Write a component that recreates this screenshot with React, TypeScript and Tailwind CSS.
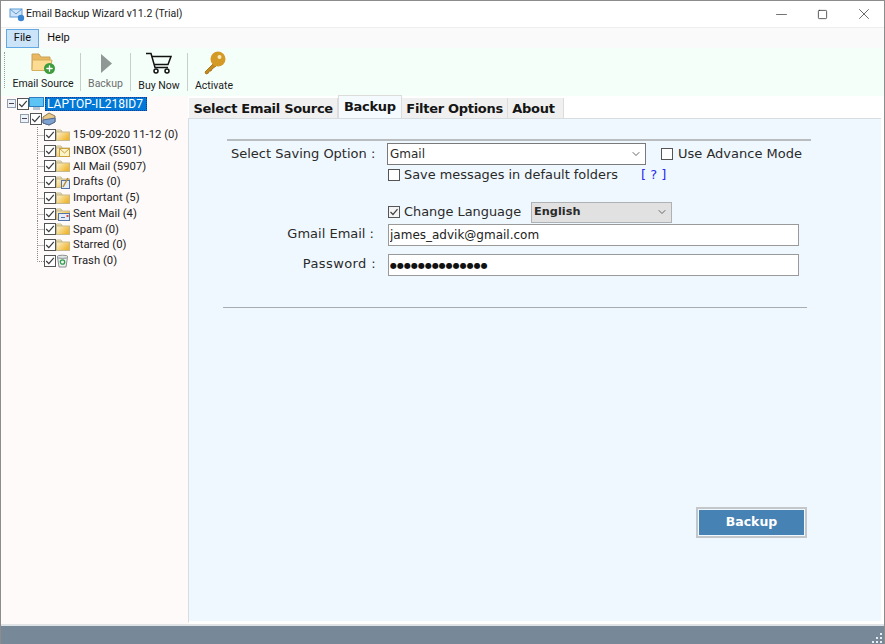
import { ChevronDown, Minus, Plus, Square, X } from "lucide-react"
import type { ReactNode } from "react"

const folders = [
  { label: "15-09-2020 11-12 (0)", icon: "folder" },
  { label: "INBOX (5501)", icon: "inbox" },
  { label: "All Mail (5907)", icon: "folder" },
  { label: "Drafts (0)", icon: "drafts" },
  { label: "Important (5)", icon: "folder" },
  { label: "Sent Mail (4)", icon: "sent" },
  { label: "Spam (0)", icon: "folder" },
  { label: "Starred (0)", icon: "folder" },
  { label: "Trash (0)", icon: "trash" },
]

function TreeCheck() {
  return (
    <svg width="12" height="12" viewBox="0 0 12 12" className="shrink-0">
      <rect x="0.5" y="0.5" width="11" height="11" fill="#fff" stroke="#555" />
      <path d="M2.2 6 L4.8 8.6 L9.8 2.8" fill="none" stroke="#3a3a3a" strokeWidth="1.2" />
    </svg>
  )
}

function FormCheck({ checked }: { checked?: boolean }) {
  return (
    <svg width="12" height="12" viewBox="0 0 12 12" className="shrink-0">
      <rect x="0.5" y="0.5" width="11" height="11" fill={checked ? "#f4f4f4" : "#fff"} stroke="#555" />
      {checked && <path d="M2.5 6 L5 8.5 L9.5 3.2" fill="none" stroke="#444" strokeWidth="1.2" />}
    </svg>
  )
}

function Expander() {
  return (
    <svg width="9" height="9" viewBox="0 0 9 9" className="shrink-0">
      <rect x="0.5" y="0.5" width="8" height="8" fill="#eef1f5" stroke="#8f9eae" />
      <path d="M2 4.5 H7" stroke="#445" />
    </svg>
  )
}

function TreeLine({ last }: { last?: boolean }) {
  return (
    <svg width="8" height="16" viewBox="0 0 8 16" className="shrink-0">
      <path
        d={last ? "M0.5 0 V8.5 H8" : "M0.5 0 V16 M0.5 8.5 H8"}
        fill="none"
        stroke="#888"
        strokeDasharray="1 1"
      />
    </svg>
  )
}

function FolderIcon({ kind }: { kind: string }) {
  if (kind === "trash") {
    return (
      <svg width="13" height="14" viewBox="0 0 13 14" className="shrink-0">
        <path d="M1.5 3 L3 13 H10 L11.5 3 Z" fill="#eef2f2" stroke="#8a8f8f" />
        <ellipse cx="6.5" cy="2.8" rx="5.5" ry="1.6" fill="#dfe6e6" stroke="#8a8f8f" />
        <circle cx="6.5" cy="8" r="2.2" fill="none" stroke="#2e9e4a" strokeWidth="1.3" />
      </svg>
    )
  }
  return (
    <svg width="14" height="14" viewBox="0 0 14 14" className="shrink-0">
      <defs>
        <linearGradient id="folder-fill" x1="0" y1="0" x2="1" y2="0.6">
          <stop offset="0" stopColor="#fdf4d2" />
          <stop offset="1" stopColor="#efb52d" />
        </linearGradient>
      </defs>
      <path d="M0.5 4 V2 H5 L6.2 4 Z" fill="#fbeebb" stroke="#c6b98f" />
      <rect x="0.5" y="4" width="13" height="8.5" fill="url(#folder-fill)" stroke="#c6b98f" />
      {kind === "inbox" && (
        <g>
          <rect x="3.5" y="4.5" width="10" height="8" fill="#fdf3c8" stroke="#c9a13e" />
          <path d="M3.5 4.5 L8.5 9 L13.5 4.5" fill="none" stroke="#c9a13e" />
        </g>
      )}
      {kind === "drafts" && (
        <g>
          <rect x="5.5" y="5.5" width="8" height="8" fill="#e3ecf8" stroke="#5572a8" />
          <path d="M7 12 L12 3" stroke="#b98a2c" strokeWidth="1.5" />
        </g>
      )}
      {kind === "sent" && (
        <g>
          <rect x="2.5" y="6.5" width="11" height="7" fill="#e3ecf8" stroke="#5572a8" />
          <path d="M5 10.5 H9" stroke="#5572a8" />
          <rect x="10.5" y="8" width="2" height="2" fill="#d94a3a" />
        </g>
      )}
    </svg>
  )
}

function ToolButton({
  label,
  icon,
  muted,
  low,
}: {
  label: string
  icon: ReactNode
  muted?: boolean
  low?: boolean
}) {
  return (
    <div className="flex h-full flex-col items-center pt-[3px]">
      <div className="flex h-[24px] items-center justify-center">{icon}</div>
      <span
        className={`whitespace-nowrap text-[10.5px] leading-[14px] ${low ? "mt-[4px]" : "mt-[2px]"} ${muted ? "text-[#6d6d6d]" : "text-[#1a1a1a]"}`}
      >
        {label}
      </span>
    </div>
  )
}

function ToolDivider() {
  return <div className="mt-[5px] h-[38px] w-px shrink-0 bg-[#c8cfcb]" />
}

function Tab({ label, active, last }: { label: string; active?: boolean; last?: boolean }) {
  return (
    <div
      className={
        active
          ? "z-10 flex h-[23px] w-[64px] items-center justify-center border-x border-t border-[#dcdcdc] bg-[#f5faff] pb-[1px]"
          : `flex h-[20px] items-center border-r border-[#dcdcdc] bg-[#f0f0f0] pl-[4.5px] pt-[2px] ${last ? "pr-[8px]" : "pr-[4px]"}`
      }
    >
      {label}
    </div>
  )
}

export default function App() {
  return (
    <div className="flex h-[644px] w-[885px] flex-col overflow-hidden border-x border-[#8c8c8c] bg-white font-['Roboto',sans-serif] text-[#111]">
      {/* title bar */}
      <header className="flex h-[27px] shrink-0 items-center border-t border-[#8c8c8c] bg-white pl-[8px]">
        <svg width="16" height="16" viewBox="0 0 16 16" className="shrink-0">
          <rect x="1" y="3" width="12" height="8" fill="#cfe4f8" stroke="#5b9bd5" />
          <path d="M1 3 L7 8 L13 3" fill="none" stroke="#5b9bd5" />
          <circle cx="12" cy="12" r="3.2" fill="#3b86d0" />
        </svg>
        <span className="ml-[1px] text-[10.5px] text-[#222]">Email Backup Wizard v11.2 (Trial)</span>
        <div className="ml-auto flex items-center gap-[27px] pr-[11px]">
          <Minus size={17} strokeWidth={0.9} className="text-[#222]" />
          <Square size={11} strokeWidth={1.6} className="text-[#222]" />
          <X size={18} strokeWidth={0.9} className="text-[#222]" />
        </div>
      </header>

      {/* menu */}
      <nav className="flex h-[21px] shrink-0 items-center gap-[1px] border-t border-[#eeeeee] bg-[#fafafa] pl-[5px] text-[11px]">
        <div className="flex h-[19px] w-[33px] items-center justify-center border border-[#62a8e5] bg-[#cce4f7]">File</div>
        <div className="flex h-[19px] w-[37px] items-center justify-center">Help</div>
      </nav>

      {/* toolbar */}
      <div className="flex h-[48px] shrink-0 bg-[#f5fffa] pl-[3px]">
        <div className="mt-[4px] h-[36px] w-[2px] shrink-0 border-l border-dotted border-[#999]" />
        <div className="w-[74px]">
          <ToolButton
            label="Email Source"
            icon={
              <div className="relative h-[22px] w-[24px]">
                <svg width="22" height="20" viewBox="0 0 22 20">
                  <path d="M1 2 H8 L10 5 H19 V18 H1 Z" fill="#e9b85f" stroke="#c9a15a" />
                  <path d="M1.5 8 H21 L19 18.5 H1 Z" fill="#fbdc92" stroke="#d7ad5e" />
                </svg>
                <div className="absolute bottom-0 right-0 flex size-[11px] items-center justify-center rounded-full bg-[#3e9c3e]">
                  <Plus size={9} strokeWidth={3.5} className="text-white" />
                </div>
              </div>
            }
          />
        </div>
        <ToolDivider />
        <div className="w-[49px]">
          <ToolButton
            muted
            label="Backup"
            icon={
              <svg width="12" height="19" viewBox="0 0 12 19">
                <path d="M1 0 L12 9.5 L1 19 Z" fill="#8f9895" />
              </svg>
            }
          />
        </div>
        <ToolDivider />
        <div className="w-[56px]">
          <ToolButton
            low
            label="Buy Now"
            icon={
              <svg width="26" height="22" viewBox="0 0 26 22" fill="none" stroke="#111" strokeWidth="1.5">
                <path d="M0 1.5 H5 L9 15.5 H22" />
                <path d="M6 4.5 H25 L22 12.5 H8.5" />
                <circle cx="10" cy="19" r="2" />
                <circle cx="21" cy="19" r="2" />
              </svg>
            }
          />
        </div>
        <ToolDivider />
        <div className="w-[52px]">
          <ToolButton
            low
            label="Activate"
            icon={
              <svg width="23" height="24" viewBox="0 0 23 24">
                <path d="M10 13 L2 21 L3 23 L5.5 22 L6 20 L8 20 L9 18 L13 15" fill="#c68c1e" stroke="#a8761a" strokeWidth="1" />
                <circle cx="15" cy="8" r="7.5" fill="#d49a25" />
                <circle cx="16.5" cy="6" r="2" fill="#fbeab8" />
              </svg>
            }
          />
        </div>
      </div>

      {/* main */}
      <main className="flex min-h-0 flex-1">
        {/* tree */}
        <aside className="w-[187px] shrink-0 bg-[#fffafa] pl-[6px] text-[12px] text-[#222]">
          <div className="flex h-[15px] items-center">
            <Expander />
            <div className="ml-[1px]"><TreeCheck /></div>
            <svg width="15" height="14" viewBox="0 0 15 14" className="shrink-0">
              <rect x="0.5" y="0.5" width="14" height="9" fill="#5cc3f5" stroke="#2a7fc0" />
              <rect x="4" y="10" width="7" height="3" fill="#b8c6d2" />
            </svg>
            <span className="ml-[1px] flex h-[14px] w-[102px] items-center border border-dotted border-[#0b3d91] bg-[#0078d7] px-[1px] text-white">
              LAPTOP-IL218ID7
            </span>
          </div>
          <div className="ml-[13px] flex h-[15px] items-center">
            <Expander />
            <div className="ml-[1px]"><TreeCheck /></div>
            <svg width="14" height="14" viewBox="0 0 14 14" className="shrink-0">
              <path d="M1 5 L7 1 L13 4 V10 L7 13 L1 11 Z" fill="#e9c98a" stroke="#8b7a55" />
              <path d="M1 8 L13 6 V10 L7 13 L1 11 Z" fill="#7fa1cf" stroke="#4d6a94" />
            </svg>
          </div>
          <div className="ml-[30px] mt-[1px] flex flex-col">
            {folders.map((f, i) => (
              <div key={f.label} className="flex h-[15.75px] items-center">
                <div className="-mr-[1px]"><TreeLine last={i === folders.length - 1} /></div>
                <TreeCheck />
                <FolderIcon kind={f.icon} />
                <span className="ml-[3px] whitespace-nowrap text-[11.3px] leading-none">{f.label}</span>
              </div>
            ))}
          </div>
        </aside>

        {/* content */}
        <section className="flex min-w-0 flex-1 flex-col pr-[3px]">
          <div className="flex h-[22px] shrink-0 items-end pl-[1px] font-['DejaVu_Sans',sans-serif] text-[13px] font-bold tracking-[-0.3px] text-[#151515]">
            <Tab label="Select Email Source" />
            <Tab label="Backup" active />
            <Tab label="Filter Options" />
            <Tab label="About" last />
          </div>

          <div className="flex min-h-0 flex-1 flex-col border-b-[3px] border-l border-t border-b-white border-l-[#d8dde2] border-t-[#d8dde2] bg-[#f0f8ff] font-['DejaVu_Sans',sans-serif] text-[13px] text-[#2a2a2a]">
            <div className="ml-[38px] mt-[20px] h-[2px] w-[584px] shrink-0 bg-[#b9bdc0]" />

            <div className="mt-[2px] flex h-[22px] shrink-0 items-center">
              <span className="ml-[42px] w-[156px] whitespace-nowrap">Select Saving Option :</span>
              <div className="flex h-[22px] w-[259px] items-center justify-between border border-[#7a7a7a] bg-white pl-[2px] pr-[3px] text-[12px]">
                Gmail
                <ChevronDown size={12} className="text-[#666]" />
              </div>
              <div className="ml-[15px]"><FormCheck /></div>
              <span className="ml-[5px] whitespace-nowrap">Use Advance Mode</span>
            </div>

            <div className="flex h-[20px] shrink-0 items-center pl-[199px] text-[12.9px]">
              <FormCheck />
              <span className="ml-[4px] whitespace-nowrap">Save messages in default folders</span>
              <span className="ml-[23px] whitespace-pre text-[13px] text-[#2a2af0]">[ ? ]</span>
            </div>

            <div className="mt-[16px] flex h-[22px] shrink-0 items-center pl-[199px] text-[12.9px]">
              <FormCheck checked />
              <span className="ml-[4px] whitespace-nowrap">Change Language</span>
              <div className="ml-[10px] flex h-[21px] w-[141px] items-center justify-between border border-[#aeb2b5] bg-[#e1e1e1] pl-[2px] pr-[3px] text-[11.3px] font-bold">
                English
                <ChevronDown size={12} className="text-[#666]" />
              </div>
            </div>

            <div className="mt-[1px] flex h-[22px] shrink-0 items-center">
              <span className="w-[199px] whitespace-nowrap pb-[2px] pr-[14px] text-right">Gmail Email :</span>
              <input
                readOnly
                value="james_advik@gmail.com"
                className="h-[22px] w-[411px] border border-[#9a9a9a] bg-white px-[1px] text-[12px] text-[#222] outline-none"
              />
            </div>

            <div className="mt-[8px] flex h-[22px] shrink-0 items-center">
              <span className="w-[199px] whitespace-nowrap pb-[2px] pr-[12px] text-right tracking-[0.4px]">Password :</span>
              <input
                readOnly
                value="●●●●●●●●●●●●●●"
                className="h-[22px] w-[411px] border border-[#9a9a9a] bg-white px-[1px] text-[8px] text-[#111] outline-none"
              />
            </div>

            <div className="ml-[34px] mt-[31px] h-[1px] w-[584px] shrink-0 bg-[#a9adb0]" />

            <div className="mr-[74px] mt-[199px] flex shrink-0 justify-end">
              <button className="h-[31px] w-[111px] border-[2px] border-[#c3c7ca] bg-[#4682b4] p-0 text-[12.5px] font-bold text-white shadow-[inset_0_0_0_1px_#f0f8ff]">
                Backup
              </button>
            </div>
          </div>
        </section>
      </main>

      {/* status */}
      <footer className="relative h-[20px] shrink-0 border-t-2 border-[#dfe3e6] bg-[#778899]">
        <svg width="12" height="12" viewBox="0 0 12 12" className="absolute bottom-[1px] right-[1px]">
          <path d="M9 2h2v2H9zM5 6h2v2H5zM9 6h2v2H9zM1 10h2v2H1zM5 10h2v2H5zM9 10h2v2H9z" fill="#e8edf0" />
        </svg>
      </footer>
    </div>
  )
}
